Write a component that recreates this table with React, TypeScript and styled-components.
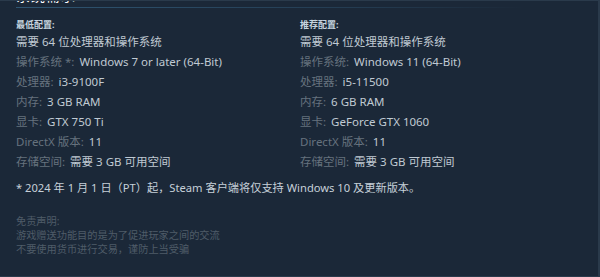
import React from "react";
import styled, { createGlobalStyle } from "styled-components";

const BG = "#1b2838";
const LABEL = "#66727e";
const VALUE = "#c0cad3";
const FONT = `"Noto Sans", "Noto Sans CJK SC", Arial, sans-serif`;

const GlobalStyle = createGlobalStyle`
  html, body {
    margin: 0;
    padding: 0;
    background: ${BG};
  }
  * {
    box-sizing: border-box;
  }
`;

const Panel = styled.div`
  width: 600px;
  height: 277px;
  overflow: hidden;
  background: ${BG};
  border-top: 1px solid #2a3a4b;
  border-right: 2px solid #2a3a4b;
  border-bottom: 1px solid #2a3a4b;
  padding-left: 16px;
  font-family: ${FONT};
`;

// the section heading is mostly scrolled out of view in the reference
const Heading = styled.h2`
  margin: -13px 0 0;
  font-size: 14px;
  line-height: 16px;
  font-weight: 400;
  color: #ffffff;
  letter-spacing: 1px;
`;

const Rule = styled.div`
  width: 510px;
  height: 1px;
  margin-top: 3px;
  background: linear-gradient(to right, #2f5572 0%, rgba(47, 85, 114, 0.4) 70%, rgba(47, 85, 114, 0) 100%);
`;

const Columns = styled.div`
  display: grid;
  grid-template-columns: 284px 284px;
  margin-top: 10px;
`;

const Column = styled.div`
  display: flex;
  flex-direction: column;
`;

const ColTitle = styled.div`
  font-size: 9px;
  line-height: 14px;
  font-weight: 700;
  color: #c6d4df;
`;

const List = styled.ul`
  list-style: none;
  margin: 0;
  padding: 0;
`;

const Item = styled.li`
  font-size: 11.5px;
  line-height: 20px;
  color: ${VALUE};
  white-space: nowrap;
`;

const Label = styled.span`
  color: ${LABEL};
  margin-right: 5px;
`;

const Note = styled.p`
  margin: 8px 0 0;
  font-size: 11.2px;
  line-height: 16px;
  color: #c6d0d8;
  white-space: nowrap;
`;

const Disclaimer = styled.div`
  margin-top: 18px;
  font-size: 10.2px;
  line-height: 14px;
  color: #4f5c68;
`;

type Req = { label?: string; value: string };

const minimum: Req[] = [
  { value: "需要 64 位处理器和操作系统" },
  { label: "操作系统 *:", value: "Windows 7 or later (64-Bit)" },
  { label: "处理器:", value: "i3-9100F" },
  { label: "内存:", value: "3 GB RAM" },
  { label: "显卡:", value: "GTX 750 Ti" },
  { label: "DirectX 版本:", value: "11" },
  { label: "存储空间:", value: "需要 3 GB 可用空间" },
];

const recommended: Req[] = [
  { value: "需要 64 位处理器和操作系统" },
  { label: "操作系统:", value: "Windows 11 (64-Bit)" },
  { label: "处理器:", value: "i5-11500" },
  { label: "内存:", value: "6 GB RAM" },
  { label: "显卡:", value: "GeForce GTX 1060" },
  { label: "DirectX 版本:", value: "11" },
  { label: "存储空间:", value: "需要 3 GB 可用空间" },
];

const ReqColumn = ({ title, items }: { title: string; items: Req[] }) => (
  <Column>
    <ColTitle>{title}</ColTitle>
    <List>
      {items.map((r, i) => (
        <Item key={i}>
          {r.label && <Label>{r.label}</Label>}
          {r.value}
        </Item>
      ))}
    </List>
  </Column>
);

export default function App() {
  return (
    <>
      <GlobalStyle />
      <Panel>
        <Heading>系统需求</Heading>
        <Rule />
        <Columns>
          <ReqColumn title="最低配置:" items={minimum} />
          <ReqColumn title="推荐配置:" items={recommended} />
        </Columns>
        <Note>* 2024 年 1 月 1 日（PT）起，Steam 客户端将仅支持 Windows 10 及更新版本。</Note>
        <Disclaimer>
          免责声明:
          <br />
          游戏赠送功能目的是为了促进玩家之间的交流
          <br />
          不要使用货币进行交易，谨防上当受骗
        </Disclaimer>
      </Panel>
    </>
  );
}
